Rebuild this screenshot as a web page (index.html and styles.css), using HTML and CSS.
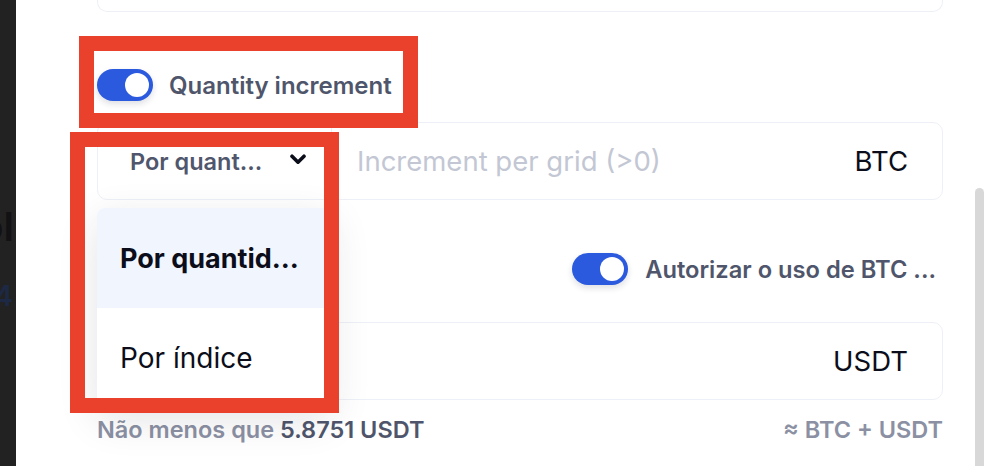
FILE: index.html
```html
<!DOCTYPE html>
<html lang="pt">
<head>
<meta charset="utf-8">
<title>Grid settings</title>
<link rel="stylesheet" href="styles.css">
</head>
<body>
<div class="page">
  <aside class="backdrop">
    <span class="bg-word">Tool</span>
    <span class="bg-num">24</span>
  </aside>
  <main class="panel">
    <div class="form">
      <div class="card-top"></div>

      <div class="toggle-row">
        <span class="toggle on"></span>
        <span class="label">Quantity increment</span>
      </div>

      <div class="field">
        <div class="select">
          <span class="select-text">Por quant...</span>
          <svg class="chevron" width="16" height="11" viewBox="0 0 16 11"><path d="M2 2.2 L8 8.2 L14 2.2" fill="none" stroke="#0b0e1a" stroke-width="3.6" stroke-linecap="round" stroke-linejoin="round"/></svg>
        </div>
        <span class="placeholder">Increment per grid (&gt;0)</span>
        <span class="unit">BTC</span>
      </div>

      <div class="toggle-row right">
        <span class="toggle on"></span>
        <span class="label label-auth">Autorizar o uso de BTC ...</span>
      </div>

      <div class="field end">
        <span class="unit">USDT</span>
      </div>

      <div class="hint-row">
        <span>Não menos que <strong>5.8751 USDT</strong></span>
        <span>≈ BTC + USDT</span>
      </div>
    </div>
    <div class="scrollbar"></div>

    <ul class="menu">
      <li class="menu-item active">Por quantid...</li>
      <li class="menu-item">Por índice</li>
    </ul>
  </main>

  <div class="mark mark-toggle"></div>
  <div class="mark mark-select"></div>
</div>
</body>
</html>
```

FILE: styles.css
```css
* { box-sizing: border-box; }

html, body {
  margin: 0;
  padding: 0;
  background: #ffffff;
  font-family: Inter, "Noto Sans", "Liberation Sans", sans-serif;
}

.page {
  position: relative;
  display: flex;
  width: 988px;
  height: 466px;
  overflow: hidden;
}

.backdrop {
  flex: none;
  width: 16px;
  background: #222222;
  overflow: hidden;
  display: flex;
  flex-direction: column;
  align-items: flex-end;
  white-space: nowrap;
}

.bg-word {
  margin-top: 203px;
  margin-right: 2px;
  font-size: 40px;
  line-height: 48px;
  font-weight: 600;
  color: #121214;
}

.bg-num {
  margin-top: 28px;
  margin-right: 3px;
  font-size: 28px;
  line-height: 34px;
  font-weight: 600;
  color: #1d2944;
}

.panel {
  position: relative;
  flex: 1;
  display: flex;
  background: #ffffff;
}

.form {
  flex: none;
  width: 846px;
  margin-left: 81px;
  display: flex;
  flex-direction: column;
}

.card-top {
  height: 12px;
  border: 1.5px solid #edf0f6;
  border-top: none;
  border-radius: 0 0 10px 10px;
}

.toggle-row {
  margin-top: 57px;
  height: 32px;
  display: flex;
  align-items: center;
  gap: 16px;
}

.toggle-row.right {
  margin-top: 53px;
  justify-content: flex-end;
  gap: 17px;
  padding-right: 7px;
}

.toggle {
  position: relative;
  flex: none;
  width: 56px;
  height: 32px;
  border-radius: 16px;
  background: #2b5ade;
  box-shadow: 0 3px 6px rgba(20, 30, 60, 0.14);
}

.toggle::after {
  content: "";
  position: absolute;
  right: 4px;
  top: 4px;
  width: 24px;
  height: 24px;
  border-radius: 50%;
  background: #ffffff;
}

.label {
  font-size: 24px;
  font-weight: 600;
  color: #4f566b;
}

.label-auth { font-size: 23.7px; }

.field {
  margin-top: 21px;
  height: 78px;
  border: 1.5px solid #edf0f6;
  border-radius: 10px;
  display: flex;
  align-items: center;
}

.field.end {
  margin-top: 37px;
  justify-content: flex-end;
}

.select {
  flex: none;
  width: 234px;
  height: 100%;
  border-right: 1.5px solid #edf0f6;
  display: flex;
  align-items: center;
  justify-content: space-between;
  padding-left: 32px;
  padding-right: 25px;
}

.select-text {
  font-size: 23.5px;
  font-weight: 600;
  color: #50576d;
}

.chevron { display: block; margin-top: -3px; }

.placeholder {
  flex: 1;
  padding-left: 25px;
  font-size: 27.5px;
  color: #c3c7d4;
}

.unit {
  padding-right: 34px;
  font-size: 27.5px;
  color: #0b0e1a;
}

.hint-row {
  margin-top: 15px;
  display: flex;
  justify-content: space-between;
  font-size: 23.5px;
  font-weight: 600;
  color: #8b90a3;
}

.hint-row strong { font-weight: 600; color: #4f566b; }

.scrollbar {
  flex: none;
  width: 9px;
  margin-top: 188px;
  margin-left: 32px;
  background: #d8d8d8;
  border-radius: 5px 5px 0 0;
}

.menu {
  position: absolute;
  left: 81px;
  top: 208px;
  width: 234px;
  margin: 0;
  padding: 0;
  list-style: none;
  background: #ffffff;
  border-radius: 8px;
  overflow: hidden;
  box-shadow: 0 12px 40px rgba(30, 35, 60, 0.12);
}

.menu-item {
  height: 100px;
  padding-left: 23px;
  display: flex;
  align-items: center;
  font-size: 28px;
  color: #0b0e1a;
}

.menu-item.active {
  background: #f1f5fe;
  font-size: 27px;
  font-weight: 700;
}

.mark {
  position: absolute;
  border: 15px solid #e9412b;
}

.mark-toggle {
  left: 79px;
  top: 36px;
  width: 339px;
  height: 92px;
}

.mark-select {
  left: 70px;
  top: 132px;
  width: 269px;
  height: 281px;
}
```
